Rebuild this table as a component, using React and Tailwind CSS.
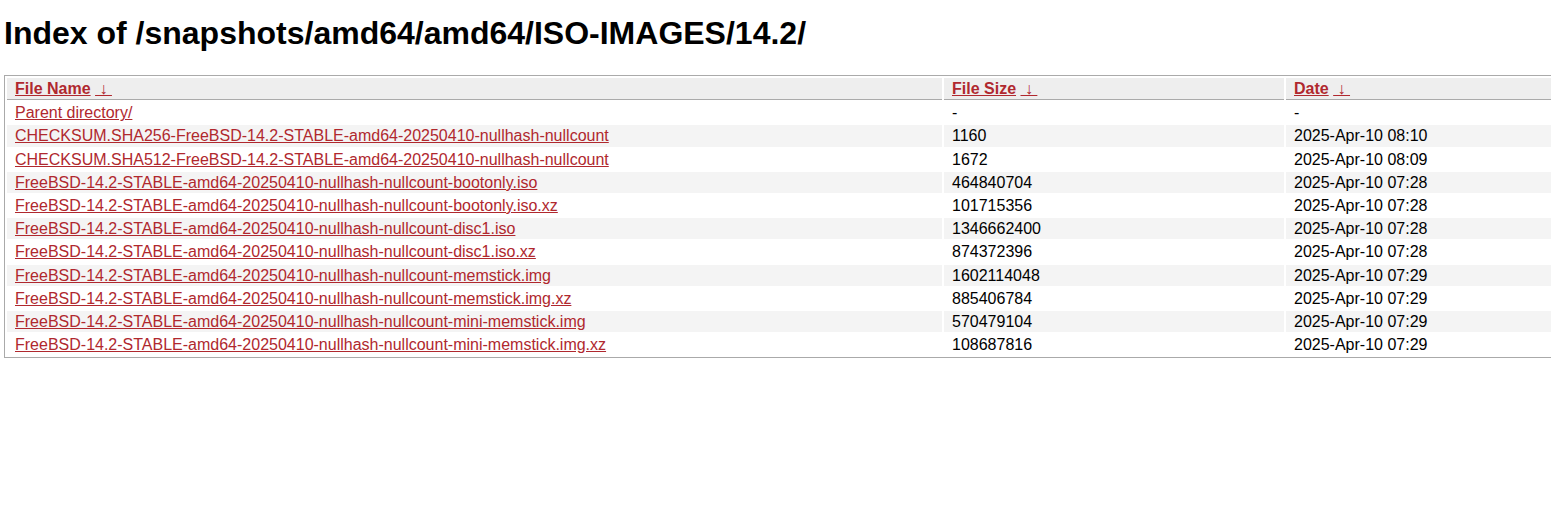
const files = [
  ['CHECKSUM.SHA256-FreeBSD-14.2-STABLE-amd64-20250410-nullhash-nullcount', '1160', '2025-Apr-10 08:10'],
  ['CHECKSUM.SHA512-FreeBSD-14.2-STABLE-amd64-20250410-nullhash-nullcount', '1672', '2025-Apr-10 08:09'],
  ['FreeBSD-14.2-STABLE-amd64-20250410-nullhash-nullcount-bootonly.iso', '464840704', '2025-Apr-10 07:28'],
  ['FreeBSD-14.2-STABLE-amd64-20250410-nullhash-nullcount-bootonly.iso.xz', '101715356', '2025-Apr-10 07:28'],
  ['FreeBSD-14.2-STABLE-amd64-20250410-nullhash-nullcount-disc1.iso', '1346662400', '2025-Apr-10 07:28'],
  ['FreeBSD-14.2-STABLE-amd64-20250410-nullhash-nullcount-disc1.iso.xz', '874372396', '2025-Apr-10 07:28'],
  ['FreeBSD-14.2-STABLE-amd64-20250410-nullhash-nullcount-memstick.img', '1602114048', '2025-Apr-10 07:29'],
  ['FreeBSD-14.2-STABLE-amd64-20250410-nullhash-nullcount-memstick.img.xz', '885406784', '2025-Apr-10 07:29'],
  ['FreeBSD-14.2-STABLE-amd64-20250410-nullhash-nullcount-mini-memstick.img', '570479104', '2025-Apr-10 07:29'],
  ['FreeBSD-14.2-STABLE-amd64-20250410-nullhash-nullcount-mini-memstick.img.xz', '108687816', '2025-Apr-10 07:29'],
];

function SortHead({ label }) {
  return (
    <>
      <a href="#" className="text-[#b0282e] underline">{label}</a>
      {'\u00a0'}
      <a href="#" className="text-[#b0282e] underline">{'\u00a0\u2193\u00a0'}</a>
    </>
  );
}

export default function App() {
  const td = 'px-2 py-px leading-[19.2px] text-left whitespace-nowrap';
  return (
    <div className="min-h-screen w-full overflow-hidden bg-white text-black font-['Liberation_Sans',Arial,sans-serif] text-base">
      <h1 className="ml-1 pt-[15px] mb-[23px] text-[32px] leading-[37px] font-bold">Index of /snapshots/amd64/amd64/ISO-IMAGES/14.2/</h1>
      <table className="ml-1 w-[1551px] border border-[#aaa] border-separate border-spacing-[2px] table-fixed">
        <colgroup>
          <col className="w-[935px]" />
          <col className="w-[340px]" />
          <col />
        </colgroup>
        <thead>
          <tr className="bg-[#eee]">
            <th className={td + ' font-bold border-b border-[#aaa]'}><SortHead label="File Name" /></th>
            <th className={td + ' font-bold border-b border-[#aaa]'}><SortHead label="File Size" /></th>
            <th className={td + ' font-bold border-b border-[#aaa]'}><SortHead label="Date" /></th>
          </tr>
        </thead>
        <tbody>
          <tr>
            <td className={td}><a href="#" className="text-[#b0282e] underline">Parent directory/</a></td>
            <td className={td}>-</td>
            <td className={td}>-</td>
          </tr>
          {files.map(([name, size, date], i) => (
            <tr key={name} className={i % 2 === 0 ? 'bg-[#f4f4f4]' : ''}>
              <td className={td}><a href="#" className="text-[#b0282e] underline">{name}</a></td>
              <td className={td}>{size}</td>
              <td className={td}>{date}</td>
            </tr>
          ))}
        </tbody>
      </table>
    </div>
  );
}
